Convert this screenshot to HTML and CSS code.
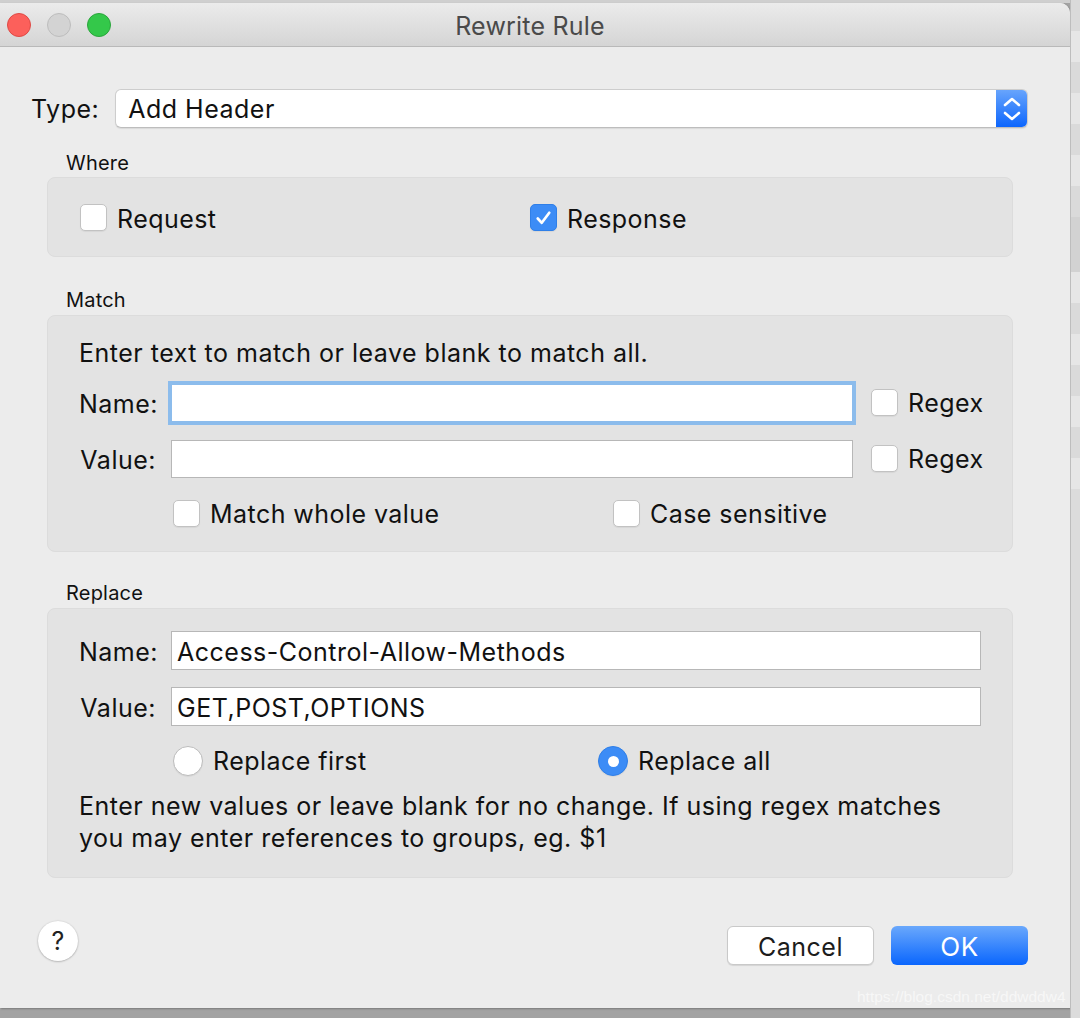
FILE: index.html
```html
<!DOCTYPE html>
<html>
<head>
<meta charset="utf-8">
<link rel="stylesheet" href="styles.css">
</head>
<body>
<div class="screen">
  <div class="window">
    <div class="titlebar">
      <div class="lights">
        <span class="light red"></span>
        <span class="light gray"></span>
        <span class="light green"></span>
      </div>
      <div class="title">Rewrite Rule</div>
      <div></div>
    </div>
    <div class="content">
      <div class="type-row">
        <span class="label">Type:</span>
        <div class="popup">
          <span class="popup-text">Add Header</span>
          <span class="stepper">
            <svg width="32" height="38" viewBox="0 0 32 38"><path d="M9 15 L16 9 L23 15" fill="none" stroke="#fff" stroke-width="2.6" stroke-linecap="round" stroke-linejoin="round"/><path d="M9 23 L16 29 L23 23" fill="none" stroke="#fff" stroke-width="2.6" stroke-linecap="round" stroke-linejoin="round"/></svg>
          </span>
        </div>
      </div>

      <div class="section-title first">Where</div>
      <div class="group where">
        <label class="check"><span class="box"></span>Request</label>
        <label class="check"><span class="box on"><svg width="26" height="26" viewBox="0 0 26 26"><path d="M7 13.5 L11.2 18 L19 7.5" fill="none" stroke="#fff" stroke-width="2.8" stroke-linecap="round" stroke-linejoin="round"/></svg></span>Response</label>
      </div>

      <div class="section-title">Match</div>
      <div class="group match">
        <div class="hint">Enter text to match or leave blank to match all.</div>
        <div class="field-row r1">
          <span class="flabel">Name:</span>
          <span class="input focus short"></span>
          <label class="check"><span class="box"></span>Regex</label>
        </div>
        <div class="field-row r2">
          <span class="flabel">Value:</span>
          <span class="input short"></span>
          <label class="check"><span class="box"></span>Regex</label>
        </div>
        <div class="opt-row">
          <label class="check"><span class="box"></span>Match whole value</label>
          <label class="check"><span class="box"></span>Case sensitive</label>
        </div>
      </div>

      <div class="section-title rep">Replace</div>
      <div class="group replace">
        <div class="field-row r3">
          <span class="flabel">Name:</span>
          <span class="input long">Access-Control-Allow-Methods</span>
        </div>
        <div class="field-row r4">
          <span class="flabel">Value:</span>
          <span class="input long">GET,POST,OPTIONS</span>
        </div>
        <div class="opt-row radios">
          <label class="radio"><span class="dot"></span>Replace first</label>
          <label class="radio"><span class="dot on"></span>Replace all</label>
        </div>
        <div class="note">Enter new values or leave blank for no change. If using regex matches<br>you may enter references to groups, eg. $1</div>
      </div>

      <div class="footer">
        <span class="help">?</span>
        <div class="buttons">
          <span class="btn cancel">Cancel</span>
          <span class="btn ok">OK</span>
        </div>
      </div>
    </div>
  </div>
  <div class="side">
    <div class="srow a"></div>
    <div class="srow b"></div>
    <div class="srow a"></div>
    <div class="srow b"></div>
    <div class="srow a"></div>
    <div class="srow b"></div>
    <div class="srow a"></div>
    <div class="srow c"></div>
    <div class="srow b"></div>
    <div class="srow a"></div>
    <div class="srow b"></div>
    <div class="srow a"></div>
    <div class="srow b"></div>
    <div class="srow a"></div>
    <div class="srow b"></div>
  </div>
  <div class="watermark">https://blog.csdn.net/ddwddw4</div>
</div>
</body>
</html>
```

FILE: styles.css
```css
* { box-sizing: border-box; }
html, body { margin: 0; padding: 0; }
body {
  width: 1080px;
  height: 1018px;
  overflow: hidden;
  background: #a3a3a3;
  font-family: "Inter", "Roboto", sans-serif;
  color: #111;
}
.screen {
  position: relative;
  display: flex;
  width: 1080px;
  height: 1018px;
  background: linear-gradient(#cfcfcf 0, #cfcfcf 3px, transparent 3px);
}
.window {
  width: 1070px;
  height: 1005px;
  margin-top: 3px;
  background: #ececec;
  border-radius: 0 10px 0 0;
  flex: none;
  box-shadow: 1px 1px 2px rgba(0,0,0,0.25);
}
.titlebar {
  height: 44px;
  display: grid;
  grid-template-columns: 1fr auto 1fr;
  align-items: center;
  background: linear-gradient(#ebebeb, #d5d5d5);
  border-bottom: 1px solid #b9b9b9;
  border-radius: 0 10px 0 0;
}
.lights { display: flex; gap: 16px; padding-left: 7px; }
.light {
  width: 24px; height: 24px; border-radius: 50%;
  display: block;
}
.red { background: #fc605b; border: 1px solid #de4a45; }
.gray { background: #d3d3d3; border: 1px solid #bdbdbd; }
.green { background: #34c84a; border: 1px solid #2ba53c; }
.title { font-size: 25px; color: #4a4a4a; letter-spacing: 0.2px; padding-top: 3px; margin-right: 10px; }

.content { padding: 42px 42px 0 31px; }
.type-row { display: flex; align-items: center; gap: 16px; height: 39px; }
.label { font-size: 25px; letter-spacing: 0.5px; padding-top: 1px; }
.popup {
  flex: 1;
  height: 39px;
  background: #fff;
  border: 1px solid #cdcdcd;
  border-bottom-color: #bdbdbd;
  border-radius: 6px;
  display: flex;
  align-items: center;
  box-shadow: 0 1px 1px rgba(0,0,0,0.08);
  overflow: hidden;
}
.popup-text { flex: 1; padding-left: 12px; padding-top: 1px; font-size: 25px; letter-spacing: 0.5px; }
.stepper {
  width: 32px; height: 39px;
  background: linear-gradient(#6aa6fc, #0a64fd);
  display: flex; align-items: center; justify-content: center;
  margin-right: -1px;
}

.section-title {
  font-size: 20px;
  line-height: 24px;
  margin: 31px 0 3px 35px;
  letter-spacing: 0.2px;
}
.section-title.first { margin-top: 23px; margin-bottom: 2px; }
.section-title.rep { margin-top: 29px; }
.group {
  margin: 0 15px 0 16px;
  background: #e3e3e3;
  border: 1px solid #dcdcdc;
  border-radius: 8px;
  font-size: 25px;
  letter-spacing: 0.5px;
}
.check, .radio { display: flex; align-items: center; gap: 10px; font-size: 25px; letter-spacing: 0.45px; line-height: 30px; }
.check > .box { margin-top: -2px; }
.box {
  width: 27px; height: 27px;
  border-radius: 5px;
  background: #fff;
  border: 1px solid #c2c2c2;
  box-shadow: 0 1px 1px rgba(0,0,0,0.06);
  display: flex; align-items: center; justify-content: center;
  flex: none;
}
.box.on { background: #3c8cf6; border-color: #2f7fe8; }

.where {
  height: 80px;
  display: grid;
  grid-template-columns: 450px auto;
  align-items: center;
  padding-left: 32px;
  padding-top: 3px;
}

.match { height: 237px; padding: 23px 0 0 31px; }
.hint { line-height: 28px; }
.field-row { display: flex; align-items: center; }
.flabel { width: 77px; text-align: right; margin-right: 15px; padding-top: 2px; }
.input {
  height: 38px;
  background: #fff;
  border: 1px solid #b7b7b7;
  display: flex; align-items: center;
  padding-left: 5px;
  padding-top: 2px;
  font-size: 25px;
  letter-spacing: 0.5px;
}
.input.short { width: 682px; margin-right: 18px; flex: none; }
.input.long { width: 810px; flex: none; }
.input.focus { box-shadow: 0 0 0 3px #8cbcec; border-color: #8cbcec; }
.r1 { margin-top: 17px; }
.r2 { margin-top: 18px; }
.opt-row {
  display: grid;
  grid-template-columns: 440px auto;
  margin-top: 21px;
  padding-left: 94px;
  height: 28px;
  align-items: center;
}

.replace { height: 270px; padding: 22px 0 0 31px; }
.r3 .input, .r4 .input { height: 39px; }
.r4 { margin-top: 17px; }
.radios { margin-top: 20px; height: 30px; grid-template-columns: 425px auto; }
.dot {
  width: 30px; height: 30px; border-radius: 50%;
  background: #fff; border: 1px solid #bcbcbc;
  box-shadow: 0 1px 1px rgba(0,0,0,0.06);
  display: flex; align-items: center; justify-content: center;
  flex: none;
}
.dot.on { background: #3c8cf6; border-color: #2f7fe8; }
.dot.on::after { content: ""; width: 11px; height: 11px; border-radius: 50%; background: #fff; }
.note { margin-top: 14px; line-height: 32px; }

.footer {
  display: flex;
  justify-content: space-between;
  align-items: center;
  margin-top: 38px;
  padding-left: 7px;
}
.help {
  width: 40px; height: 40px; border-radius: 50%;
  background: #fff;
  box-shadow: 0 0.5px 2px rgba(0,0,0,0.35);
  display: flex; align-items: center; justify-content: center;
  font-size: 25px; color: #222;
}
.buttons { display: flex; gap: 17px; margin-top: 10px; }
.btn {
  height: 39px;
  border-radius: 6px;
  display: flex; align-items: center; justify-content: center;
  font-size: 25px;
  letter-spacing: 0.5px;
  padding-top: 2px;
}
.cancel {
  width: 147px;
  background: #fff;
  border: 1px solid #c9c9c9;
  box-shadow: 0 1px 1px rgba(0,0,0,0.1);
  color: #1c1c1c;
}
.ok {
  width: 137px;
  background: linear-gradient(#6aa8fc, #0a66fd);
  color: #fff;
  font-size: 26px;
}

.side {
  width: 10px;
  height: 1018px;
  overflow: hidden;
  display: flex;
  flex-direction: column;
  background: #dcdcdc;
  border-left: 1px solid #bdbdbd;
}
.srow { height: 31px; flex: none; }
.srow.a { background: #dadada; }
.srow.b { background: #e6e6e6; }
.srow.c { background: #d2d2d2; height: 55px; }

.watermark {
  position: absolute;
  left: 857px;
  top: 988px;
  font-family: "Liberation Sans", sans-serif;
  font-size: 15.5px;
  color: rgba(255,255,255,0.6);
  white-space: nowrap;
}
```
